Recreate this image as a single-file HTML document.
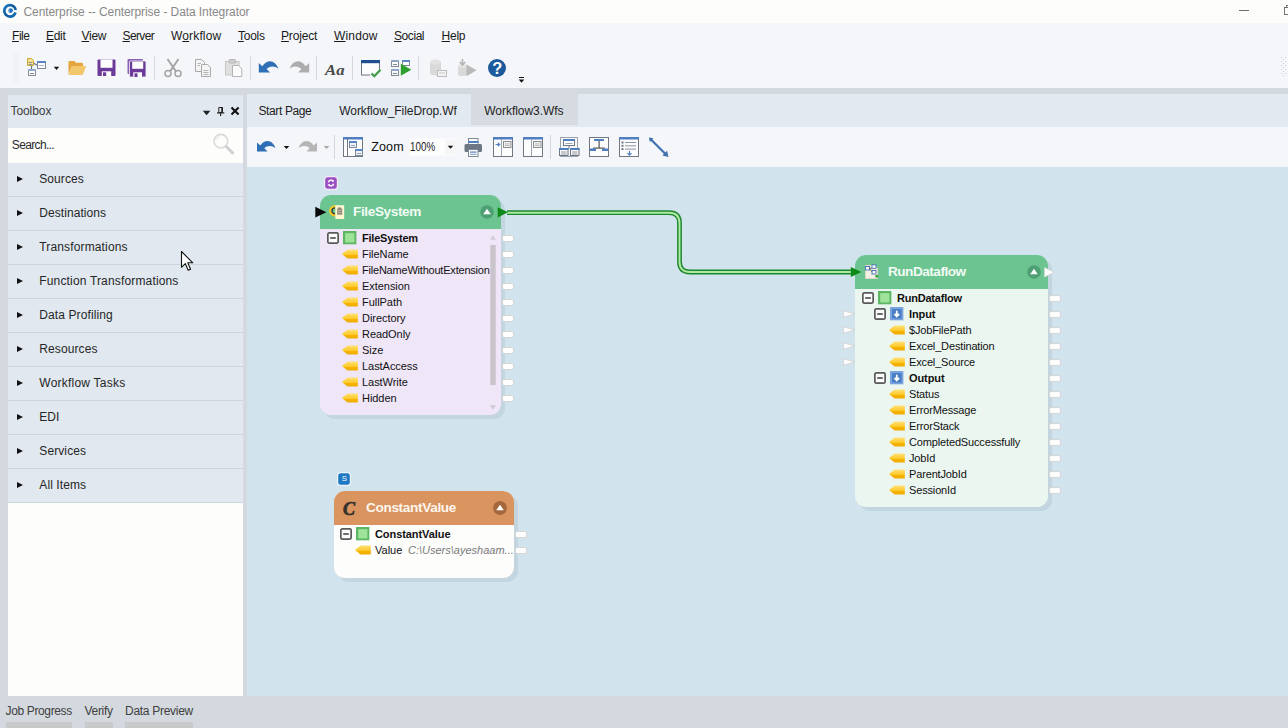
<!DOCTYPE html>
<html lang="en">
<head>
<meta charset="utf-8">
<title>Centerprise -- Centerprise - Data Integrator</title>
<style>
*{box-sizing:border-box;margin:0;padding:0}
html,body{width:1288px;height:728px;overflow:hidden;background:#d4d9df}
body{position:relative;font-family:"Liberation Sans",sans-serif;color:#1e1e1e}
.abs{position:absolute}
.t{position:absolute;white-space:nowrap;line-height:1}
#titlebar{left:0;top:0;width:1288px;height:22.500px;background:#fdfdfc}
#chrome{left:0;top:22.500px;width:1288px;height:65.500px;background:#f4f6f9}
#band{left:0;top:88px;width:1288px;height:7px;background:#d4d9df}
.menu{font-size:12px;top:30px;color:#1a1a1a}
.menu u{text-decoration:underline;text-underline-offset:1px;text-decoration-thickness:1px}
#tbx{left:7.500px;top:94.500px;width:235.700px;height:601.500px;background:#fdfdfc}
#tbxhead{left:0;top:0;width:100%;height:33.500px;background:#e1e8f0}
.item{left:0.500px;width:235.200px;height:34px;background:#e1e8f0;border-bottom:1px solid #ccd4dc;margin-top:0.500px}
.item span{position:absolute;left:31.300px;top:9.500px;font-size:12px;letter-spacing:0.1px;color:#262626;white-space:nowrap;line-height:1}
.item i{position:absolute;left:8.600px;top:13px;width:0;height:0;border-left:6px solid #111;border-top:3.800px solid transparent;border-bottom:3.800px solid transparent}
#tabs{left:246.800px;top:94px;width:1042px;height:33.500px;background:#e2e9f1}
.tab{font-size:12px;top:10.800px;color:#1e1e1e}
#tb2{left:246.800px;top:126.600px;width:1042px;height:41px;background:#f4f6f9}
#canvas{left:246.800px;top:166.700px;width:1042px;height:529.300px;background:#d1e3ec}
#status{left:0;top:696px;width:1288px;height:32px;background:#d4d9df}
.st{font-size:12px;top:9px;color:#404040}
.stb{top:26px;height:6.500px;background:#c8c9cb}
.node{position:absolute;border-radius:11px;box-shadow:4px 4px 0 #c3d5df}
.hd{position:absolute;left:0;top:0;right:0;height:34.500px;border-radius:11px 11px 0 0}
.ht{position:absolute;white-space:nowrap;line-height:1;font-size:13.600px;font-weight:bold;color:#f2fbf4}
.r{position:absolute;white-space:nowrap;line-height:1;font-size:11px;color:#111}
.r.b{font-weight:bold}
.port{position:absolute;width:12.500px;height:7px;border-radius:2px;background:#fdfdfd;border:1px solid #d6d6d6}

</style>
</head>
<body>
<div id="titlebar" class="abs"></div>
<div class="t" id="title" style="left:23.500px;top:6px;font-size:12px;color:#898989;letter-spacing:-0.08px">Centerprise -- Centerprise - Data Integrator</div>
<div class="abs" style="left:1239px;top:10px;width:10px;height:1px;background:#6e6e6e"></div>
<div class="abs" style="left:1284px;top:7px;width:10px;height:8px;border:1px solid #747474"></div>
<div class="abs" style="left:1286px;top:5px;width:8px;height:3px;border:1px solid #747474;border-bottom:0"></div>

<div id="chrome" class="abs"></div>
<div class="t menu" style="left:12px;letter-spacing:-0.44px"><u>F</u>ile</div>
<div class="t menu" style="left:46px;letter-spacing:-0.3px"><u>E</u>dit</div>
<div class="t menu" style="left:81.500px;letter-spacing:-0.27px"><u>V</u>iew</div>
<div class="t menu" style="left:122.500px;letter-spacing:-0.61px"><u>S</u>erver</div>
<div class="t menu" style="left:171px;letter-spacing:0.15px">W<u>o</u>rkflow</div>
<div class="t menu" style="left:238px;letter-spacing:-0.26px"><u>T</u>ools</div>
<div class="t menu" style="left:281px;letter-spacing:-0.15px"><u>P</u>roject</div>
<div class="t menu" style="left:334px;letter-spacing:0.17px"><u>W</u>indow</div>
<div class="t menu" style="left:394px;letter-spacing:-0.43px"><u>S</u>ocial</div>
<div class="t menu" style="left:441.500px;letter-spacing:-0.22px"><u>H</u>elp</div>
<svg class="abs" style="left:0;top:0" width="30" height="23" viewBox="0 0 30 23">
  <defs><linearGradient id="lg" x1="0" y1="0" x2="1" y2="1"><stop offset="0" stop-color="#1a7cc4"/><stop offset="0.5" stop-color="#0b579d"/><stop offset="1" stop-color="#1673b8"/></linearGradient></defs>
  <circle cx="10" cy="10.800" r="5.750" fill="none" stroke="url(#lg)" stroke-width="2.700" stroke-dasharray="32.500 3.630" stroke-dashoffset="-1.800"/>
  <circle cx="10.600" cy="10.600" r="2.300" fill="#1e73c2"/>
  <rect x="8.300" y="9.700" width="1.200" height="1.900" fill="#9cc3e6"/>
</svg>
<svg class="abs" style="left:0;top:50px" width="540" height="38" viewBox="0 50 540 38">
  <!-- grip -->
  <g fill="#d5d9df"><rect x="13.500" y="53" width="1" height="1"/><rect x="17.500" y="53" width="1" height="1"/><rect x="15.500" y="55" width="1" height="1"/><rect x="13.500" y="57" width="1" height="1"/><rect x="17.500" y="57" width="1" height="1"/><rect x="15.500" y="59" width="1" height="1"/><rect x="13.500" y="61" width="1" height="1"/><rect x="17.500" y="61" width="1" height="1"/><rect x="15.500" y="63" width="1" height="1"/><rect x="13.500" y="65" width="1" height="1"/><rect x="17.500" y="65" width="1" height="1"/><rect x="15.500" y="67" width="1" height="1"/><rect x="13.500" y="69" width="1" height="1"/><rect x="17.500" y="69" width="1" height="1"/><rect x="15.500" y="71" width="1" height="1"/><rect x="13.500" y="73" width="1" height="1"/><rect x="17.500" y="73" width="1" height="1"/><rect x="15.500" y="75" width="1" height="1"/><rect x="13.500" y="77" width="1" height="1"/><rect x="17.500" y="77" width="1" height="1"/><rect x="15.500" y="79" width="1" height="1"/><rect x="13.500" y="81" width="1" height="1"/><rect x="17.500" y="81" width="1" height="1"/></g>
  <!-- new dataflow -->
  <g>
    <path d="M32.5 62.5 L37.5 65.5 M31.5 66 V70" stroke="#6b7785" stroke-width="1.2" fill="none"/>
    <path d="M27.5 58.5 H31.5 L33.5 60.5 V65.5 H27.5 Z" fill="#f7e08a" stroke="#c9a93a" stroke-width="1"/>
    <rect x="28.5" y="62" width="4" height="1" fill="#8d95a0"/><rect x="28.5" y="64" width="4" height="1" fill="#8d95a0"/>
    <rect x="37.5" y="61.5" width="8" height="7" fill="#fdfdfd" stroke="#7f8a99" stroke-width="1"/>
    <rect x="37" y="61" width="9" height="2" fill="#5b86c4"/>
    <rect x="39" y="65" width="5" height="1" fill="#a9b2bd"/>
    <rect x="28.5" y="69.500" width="7" height="6" fill="#fdfdfd" stroke="#7f8a99" stroke-width="1"/>
    <rect x="28" y="69" width="8" height="2" fill="#8fa7c9"/>
    <rect x="30" y="73" width="4" height="1" fill="#7f8a99"/>
  </g>
  <path d="M53.800 66.800 H59.200 L56.500 69.900 Z" fill="#111"/>
  <!-- folder -->
  <g>
    <path d="M68.500 74.500 V62 Q68.500 61 69.500 61 H74.500 L76 62.800 H82 Q83 62.800 83 63.800 V66 H72 Z" fill="#e4a63c"/>
    <path d="M68.500 75 L72 66 H86.200 L82.800 75 Z" fill="#f2c76c"/>
  </g>
  <!-- save -->
  <g>
    <rect x="97.500" y="59.500" width="18" height="16.500" rx="1" fill="#6c3b9a"/>
    <rect x="100.500" y="59.500" width="12" height="8.300" fill="#fdfdfd"/>
    <rect x="101.800" y="71.300" width="9.400" height="4.700" fill="#fdfdfd"/>
    <rect x="103" y="72.300" width="3.200" height="3.700" fill="#6c3b9a"/>
  </g>
  <!-- save all -->
  <g>
    <rect x="127.500" y="59" width="15.500" height="15" rx="1" fill="#8b62b3"/>
    <rect x="129.500" y="61" width="16.500" height="16" rx="1" fill="#6c3b9a" stroke="#f4f6f9" stroke-width="0.800"/>
    <rect x="132.200" y="61.600" width="11" height="7.200" fill="#fdfdfd"/>
    <rect x="133.300" y="72.300" width="8.700" height="4.700" fill="#fdfdfd"/>
    <rect x="134.500" y="73.300" width="3" height="3.700" fill="#6c3b9a"/>
  </g>
  <rect x="154" y="56" width="1" height="24" fill="#d4d8de"/>
  <!-- scissors -->
  <g stroke="#a4a4a4" fill="none" stroke-width="1.500">
    <circle cx="168" cy="73.600" r="3"/><circle cx="178" cy="73.600" r="3"/>
    <path d="M170 71.500 L178.500 59 M176 71.500 L167.500 59" stroke-width="1.900"/>
  </g>
  <!-- copy -->
  <g stroke="#a9a9a9" fill="#f4f4f4" stroke-width="1">
    <path d="M195.500 59.500 H201.500 L204.500 62.500 V71.500 H195.500 Z"/>
    <path d="M201.500 64.500 H207.500 L210.500 67.500 V76.500 H201.500 Z"/>
    <path d="M203.500 70.500 H208.500 M203.500 72.500 H208.500 M203.500 74.500 H208.500 M197.500 63.500 H201 M197.500 65.500 H200" stroke="#b5b5b5"/>
  </g>
  <!-- paste -->
  <g>
    <rect x="225.500" y="61.500" width="13.500" height="13.500" fill="#e0e0e0" stroke="#c6c6c6" stroke-width="1"/>
    <rect x="229" y="59.500" width="6.500" height="3.500" rx="1" fill="#d0d0d0" stroke="#b4b4b4" stroke-width="1"/>
    <path d="M232.500 65.500 H238.500 L241.800 68.800 V76.500 H232.500 Z" fill="#fbfbfb" stroke="#b4b4b4" stroke-width="1"/>
  </g>
  <rect x="250" y="56" width="1" height="24" fill="#d4d8de"/>
  <!-- undo -->
  <path d="M258.800 63 L258.800 72.400 L270 72.400 L266.600 69 C269.500 66 274.500 65.600 278.400 68.800 C276 61.300 268 57.800 262.300 66.200 Z" fill="#2f6fb6"/>
  <!-- redo -->
  <path d="M309.200 63 L309.200 72.400 L298 72.400 L301.400 69 C298.500 66 293.500 65.600 289.600 68.800 C292 61.300 300 57.800 305.700 66.200 Z" fill="#adadad"/>
  <rect x="316" y="56" width="1" height="24" fill="#d4d8de"/>
  <text x="325" y="74.800" font-family="Liberation Serif,serif" font-style="italic" font-weight="bold" font-size="15" fill="#4a4a4a" textLength="19.500" lengthAdjust="spacingAndGlyphs">Aa</text>
  <rect x="352" y="56" width="1" height="24" fill="#d4d8de"/>
  <!-- window check -->
  <g>
    <rect x="361.500" y="61.500" width="18" height="13.500" fill="#fdfdfd" stroke="#6f7782" stroke-width="1"/>
    <rect x="361" y="60" width="19" height="3.200" fill="#1f4f91"/>
    <rect x="370" y="72" width="12" height="6" fill="#f4f6f9"/>
    <path d="M371.500 73.500 L374.300 76.300 L380.500 69.800" stroke="#3f9b45" stroke-width="2.200" fill="none"/>
  </g>
  <!-- run -->
  <g>
    <rect x="391.500" y="60.500" width="7" height="6" fill="#fdfdfd" stroke="#7f8a99"/>
    <rect x="391" y="60" width="8" height="2" fill="#8fa7c9"/>
    <rect x="393" y="64" width="4" height="1" fill="#7f8a99"/>
    <rect x="391.500" y="69.500" width="7" height="6" fill="#fdfdfd" stroke="#7f8a99"/>
    <rect x="391" y="69" width="8" height="2" fill="#8fa7c9"/>
    <rect x="393" y="73" width="4" height="1" fill="#7f8a99"/>
    <rect x="402.500" y="60.500" width="7" height="5" fill="#fdfdfd" stroke="#7f8a99"/>
    <rect x="402" y="60" width="8" height="2" fill="#5b86c4"/>
    <path d="M400.800 63.800 L411.300 69.800 L400.800 75.800 Z" fill="#2ea02e"/>
  </g>
  <rect x="418" y="56" width="1" height="24" fill="#d4d8de"/>
  <!-- db gray -->
  <g>
    <path d="M430 62 V73 A5.500 2.500 0 0 0 441 73 V62 Z" fill="#d9d9d9"/>
    <ellipse cx="435.500" cy="62" rx="5.500" ry="2.500" fill="#e3e3e3"/>
    <rect x="437.500" y="70.500" width="9" height="6" fill="#f2f2f2" stroke="#bdbdbd"/>
    <rect x="439" y="72.500" width="6" height="1" fill="#c9c9c9"/>
  </g>
  <!-- gray play -->
  <g>
    <path d="M458 66 V74 A4.500 2 0 0 0 467 74 V66 Z" fill="#d9d9d9"/>
    <ellipse cx="462.500" cy="66" rx="4.500" ry="2" fill="#e3e3e3"/>
    <path d="M462.500 59 V64.500 M459.800 62 L462.500 65 L465.200 62" stroke="#b4b4b4" stroke-width="1.600" fill="none"/>
    <path d="M466.500 64.500 L476.500 70.300 L466.500 76.200 Z" fill="#b9b9b9"/>
  </g>
  <!-- help -->
  <circle cx="497" cy="68" r="9" fill="#1d5a9c"/>
  <text x="497.200" y="74" text-anchor="middle" font-family="Liberation Sans,sans-serif" font-weight="bold" font-size="16.500" fill="#fdfdfd">?</text>
  <!-- overflow -->
  <rect x="519" y="77" width="5" height="1" fill="#111"/>
  <path d="M518.700 79.500 H524.300 L521.500 82.800 Z" fill="#111"/>
</svg>
<svg class="abs" style="left:1278px;top:55px" width="10" height="26" viewBox="1278 55 10 26">
 <g fill="#cdd1d7"><rect x="1281" y="57" width="1" height="1"/><rect x="1283" y="59" width="1" height="1"/><rect x="1281" y="61" width="1" height="1"/><rect x="1283" y="63" width="1" height="1"/><rect x="1281" y="65" width="1" height="1"/><rect x="1283" y="67" width="1" height="1"/><rect x="1281" y="69" width="1" height="1"/><rect x="1283" y="71" width="1" height="1"/><rect x="1281" y="73" width="1" height="1"/><rect x="1283" y="75" width="1" height="1"/><rect x="1285" y="57" width="1" height="1"/><rect x="1285" y="61" width="1" height="1"/><rect x="1285" y="65" width="1" height="1"/><rect x="1285" y="69" width="1" height="1"/><rect x="1285" y="73" width="1" height="1"/></g>
</svg>

<div id="band" class="abs"></div>

<div id="tbx" class="abs">
  <div id="tbxhead" class="abs"></div>
  <div class="t" style="left:3px;top:10.500px;font-size:12px;color:#3c3c3c;letter-spacing:-0.08px">Toolbox</div>
  <svg class="abs" style="left:189.500px;top:8.500px" width="46" height="18" viewBox="197 103 46 18">
    <path d="M202.800 110.800 H210.400 L206.600 115.200 Z" fill="#222"/>
    <path d="M218.800 107.500 H222.300 V112.500 H218.800 Z" stroke="#222" stroke-width="1" fill="none"/>
    <rect x="221.300" y="107" width="1.500" height="6" fill="#222"/>
    <rect x="217" y="112.300" width="7.300" height="1.200" fill="#222"/>
    <rect x="220" y="113.300" width="1.200" height="2.700" fill="#222"/>
    <path d="M231.500 107.500 L238.600 114.600 M238.600 107.500 L231.500 114.600" stroke="#111" stroke-width="2.100"/>
  </svg>

  <div class="t" style="left:4.300px;top:44.300px;font-size:12px;color:#2a2a2a;letter-spacing:-0.65px">Search...</div>
  <svg class="abs" style="left:203.500px;top:36.500px" width="26" height="26" viewBox="211 131 26 26">
    <circle cx="220.900" cy="141.200" r="6.800" fill="#fdfdfc" stroke="#dadada" stroke-width="1.700"/>
    <path d="M226.300 146.600 L232.600 152.900" stroke="#d2d2d2" stroke-width="3" stroke-linecap="round"/>
    <path d="M216.600 140 A4.600 4.600 0 0 1 219.600 136.800" stroke="#e4e4e4" stroke-width="1" fill="none"/>
  </svg>

  <div class="abs item" style="top:68px"><i></i><span style="letter-spacing:0.07px">Sources</span></div>
  <div class="abs item" style="top:102px"><i></i><span style="letter-spacing:0.06px">Destinations</span></div>
  <div class="abs item" style="top:136px"><i></i><span style="letter-spacing:0.14px">Transformations</span></div>
  <div class="abs item" style="top:170px"><i></i><span style="letter-spacing:0.16px">Function Transformations</span></div>
  <div class="abs item" style="top:204px"><i></i><span style="letter-spacing:0.1px">Data Profiling</span></div>
  <div class="abs item" style="top:238px"><i></i><span style="letter-spacing:0.1px">Resources</span></div>
  <div class="abs item" style="top:272px"><i></i><span style="letter-spacing:0.23px">Workflow Tasks</span></div>
  <div class="abs item" style="top:306px"><i></i><span style="letter-spacing:-0.04px">EDI</span></div>
  <div class="abs item" style="top:340px"><i></i><span style="letter-spacing:0.1px">Services</span></div>
  <div class="abs item" style="top:374px"><i></i><span style="letter-spacing:0.09px">All Items</span></div>
</div>

<div id="tabs" class="abs">
  <div class="abs" style="left:224.400px;top:-6px;width:106.800px;height:36.700px;background:#d6dbe1"></div>
  <div class="t tab" style="left:11.700px;letter-spacing:-0.38px">Start Page</div>
  <div class="t tab" style="left:92.500px;letter-spacing:-0.08px">Workflow_FileDrop.Wf</div>
  <div class="t tab" style="left:237.500px;letter-spacing:-0.04px">Workflow3.Wfs</div>
</div>
<div id="tb2" class="abs">
<svg class="abs" style="left:0.200px;top:-1.600px" width="460" height="42" viewBox="247 125 460 42">
  <!-- undo -->
  <path transform="translate(257,151.400) scale(0.940) translate(-258.800,-72.400)" d="M258.800 63 L258.800 72.400 L270 72.400 L266.600 69 C269.500 66 274.500 65.600 278.400 68.800 C276 61.300 268 57.800 262.300 66.200 Z" fill="#2f6fb6"/>
  <path d="M283.700 146 H289.300 L286.500 149 Z" fill="#111"/>
  <!-- redo -->
  <path transform="translate(317,151.400) scale(0.940) translate(-309.200,-72.400)" d="M309.200 63 L309.200 72.400 L298 72.400 L301.400 69 C298.500 66 293.500 65.600 289.600 68.800 C292 61.300 300 57.800 305.700 66.200 Z" fill="#b5b5b5"/>
  <path d="M323.700 146 H329.300 L326.500 149 Z" fill="#a8a8a8"/>
  <rect x="334" y="135" width="1" height="24" fill="#d4d8de"/>
  <!-- layout icon -->
  <g>
    <rect x="343.500" y="138.500" width="19" height="18" fill="#fdfdfd" stroke="#6f7782"/>
    <rect x="343" y="137" width="20" height="2.500" fill="#4f7fc0"/>
    <rect x="347" y="139" width="1" height="17" fill="#6f7782"/>
    <rect x="349.500" y="141.500" width="7" height="6" fill="#eef2f7" stroke="#7f8a99"/>
    <rect x="349" y="141" width="8" height="2" fill="#5b86c4"/>
    <rect x="351" y="145" width="4" height="1" fill="#9aa3ae"/>
    <rect x="355.500" y="149.500" width="7" height="6" fill="#eef2f7" stroke="#7f8a99"/>
    <rect x="355" y="149" width="8" height="2" fill="#5b86c4"/>
    <rect x="357" y="153" width="4" height="1" fill="#9aa3ae"/>
  </g>
  <rect x="409" y="138.500" width="47.500" height="17" fill="#fdfdfd"/><rect x="445" y="139.500" width="11.500" height="15" fill="#f6f6f6"/>
  <path d="M447.700 145.800 H453.300 L450.500 148.800 Z" fill="#111"/>
  <!-- printer -->
  <g>
    <rect x="468.500" y="138.500" width="9.500" height="6" fill="#fdfdfd" stroke="#7f8a99"/>
    <rect x="468" y="141" width="10.500" height="2" fill="#4f7fc0"/>
    <rect x="464.500" y="144" width="17.500" height="8" rx="1.500" fill="#6d7683"/>
    <rect x="468.500" y="149.500" width="9.500" height="7" fill="#fdfdfd" stroke="#7f8a99"/>
    <rect x="470" y="151.500" width="6.500" height="1.200" fill="#4f7fc0"/><rect x="470" y="153.800" width="6.500" height="1.200" fill="#8fa7c9"/>
  </g>
  <!-- panel icon 1 -->
  <g>
    <rect x="493.500" y="138.500" width="19" height="18" fill="#fdfdfd" stroke="#6f7782"/>
    <rect x="493" y="137" width="20" height="2.500" fill="#4f7fc0"/>
    <rect x="501" y="139" width="1" height="17" fill="#9aa3ae"/>
    <rect x="503.500" y="141.500" width="7.500" height="6" fill="#f0f0f0" stroke="#8d8d8d"/>
    <rect x="505" y="143.500" width="4.500" height="0.800" fill="#b0b0b0"/><rect x="505" y="145.200" width="4.500" height="0.800" fill="#b0b0b0"/>
    <path d="M495.500 144.500 H499.500 M497.800 142.800 L499.600 144.500 L497.800 146.200" stroke="#4f7fc0" stroke-width="1.200" fill="none"/>
  </g>
  <!-- panel icon 2 -->
  <g>
    <rect x="523.500" y="138.500" width="19" height="18" fill="#fdfdfd" stroke="#6f7782"/>
    <rect x="523" y="137" width="20" height="2.500" fill="#4f7fc0"/>
    <rect x="531" y="139" width="1" height="17" fill="#9aa3ae"/>
    <rect x="533.500" y="141.500" width="7.500" height="6" fill="#f0f0f0" stroke="#8d8d8d"/>
    <rect x="535" y="143.500" width="4.500" height="0.800" fill="#b0b0b0"/><rect x="535" y="145.200" width="4.500" height="0.800" fill="#b0b0b0"/>
  </g>
  <rect x="550" y="135" width="1" height="24" fill="#d4d8de"/>
  <!-- icon 3: hierarchy -->
  <g>
    <rect x="560.500" y="137.500" width="17" height="19" fill="#f7f8fa" stroke="#9aa3ae"/>
    <rect x="563.500" y="139.500" width="11" height="6" fill="#fdfdfd" stroke="#6f7782"/>
    <rect x="563" y="139" width="12" height="2" fill="#4f7fc0"/>
    <rect x="565.500" y="143" width="7" height="1" fill="#9aa3ae"/>
    <rect x="568.500" y="146" width="1" height="2.500" fill="#6f7782"/>
    <rect x="559.500" y="148.500" width="8.500" height="7" fill="#fdfdfd" stroke="#6f7782"/>
    <rect x="559" y="148" width="9.500" height="2" fill="#4f7fc0"/>
    <rect x="561" y="151.500" width="5.500" height="1" fill="#8d95a0"/><rect x="561" y="153.500" width="5.500" height="1" fill="#8d95a0"/>
    <rect x="570.500" y="148.500" width="8.500" height="7" fill="#fdfdfd" stroke="#6f7782"/>
    <rect x="570" y="148" width="9.500" height="2" fill="#4f7fc0"/>
    <rect x="572" y="151.500" width="5.500" height="1" fill="#8d95a0"/><rect x="572" y="153.500" width="5.500" height="1" fill="#8d95a0"/>
  </g>
  <!-- icon 4 -->
  <g>
    <rect x="589.500" y="137.500" width="19" height="19" fill="#fdfdfd" stroke="#6f7782"/>
    <rect x="594" y="139" width="10" height="2" fill="#4f7fc0"/>
    <rect x="598.500" y="141" width="1.200" height="7" fill="#555"/>
    <rect x="593" y="147.500" width="12" height="1.200" fill="#555"/>
    <rect x="590" y="148.500" width="6" height="2.500" fill="#4f7fc0"/><rect x="602" y="148.500" width="6" height="2.500" fill="#4f7fc0"/>
  </g>
  <!-- icon 5 -->
  <g>
    <rect x="619.500" y="138.500" width="19" height="18" fill="#fdfdfd" stroke="#6f7782"/>
    <rect x="619" y="137" width="20" height="2.500" fill="#4f7fc0"/>
    <g fill="#8d95a0"><rect x="625" y="142" width="11" height="1"/><rect x="625" y="145.300" width="11" height="1"/><rect x="625" y="148.600" width="11" height="1"/></g>
    <g fill="#6f7782"><rect x="621.500" y="141.500" width="2" height="2"/><rect x="621.500" y="144.800" width="2" height="2"/><rect x="621.500" y="148.100" width="2" height="2"/></g>
    <path d="M629.500 151 V155 M627.500 153.200 L629.500 155.200 L631.500 153.200" stroke="#4f7fc0" stroke-width="1.200" fill="none"/>
  </g>
  <!-- arrow line -->
  <g>
    <path d="M650 138.500 L665 153.500" stroke="#3f72ad" stroke-width="2.200"/>
    <path d="M649 137.500 L653.500 138.300 L649.800 142 Z" fill="#3f72ad"/>
    
    <path d="M668.500 157 L662.300 155.600 L667.100 150.800 Z" fill="#3f72ad"/>
  </g>
</svg>
<div class="t" style="left:124.500px;top:14.600px;font-size:12.500px;color:#111;letter-spacing:0.1px">Zoom</div>
<div class="t" style="left:163.500px;top:14.400px;font-size:12.300px;color:#222;transform:scaleX(0.8);transform-origin:0 0">100%</div>

</div>
<div id="canvas" class="abs"></div>

<div id="status" class="abs">
  <div class="t st" style="left:5.500px;letter-spacing:-0.36px">Job Progress</div>
  <div class="t st" style="left:84.500px;letter-spacing:-0.3px">Verify</div>
  <div class="t st" style="left:125px;letter-spacing:-0.28px">Data Preview</div>
  <div class="abs stb" style="left:5.500px;width:66.500px"></div>
  <div class="abs stb" style="left:84.500px;width:28.500px"></div>
  <div class="abs stb" style="left:125px;width:68px"></div>
</div>
<svg width="0" height="0" style="position:absolute"><defs>
<linearGradient id="tg" x1="0" y1="0" x2="0" y2="1"><stop offset="0" stop-color="#ffe27a"/><stop offset="0.55" stop-color="#fdc92b"/><stop offset="0.62" stop-color="#f4b400"/><stop offset="1" stop-color="#f1ab00"/></linearGradient>
<symbol id="tag" viewBox="0 0 16 10"><path d="M0 5 L5.500 0.400 H15.800 V9.600 H5.500 Z" fill="url(#tg)"/></symbol>
<symbol id="mn" viewBox="0 0 12 12"><rect x="0.850" y="0.850" width="10.300" height="10.300" rx="1.300" fill="#fbfbfb" stroke="#5a5a5a" stroke-width="1.700"/><rect x="3.200" y="5.200" width="5.600" height="1.600" fill="#4a4a4a"/></symbol>
<symbol id="gs" viewBox="0 0 13.600 13.600"><rect x="1.100" y="1.100" width="11.400" height="11.400" fill="#9fe39a" stroke="#5db661" stroke-width="2.200"/></symbol>
<symbol id="bi" viewBox="0 0 13 13" preserveAspectRatio="none"><rect x="0" y="0" width="13" height="13" fill="#78a3de"/><rect x="2" y="2" width="9" height="9" fill="#4a7cc4"/><path d="M6.500 3.500 V8.300 M4.300 6.600 L6.500 9 L8.700 6.600" stroke="#fdfdfd" stroke-width="1.700" fill="none"/></symbol>
<symbol id="lp" viewBox="0 0 13 8"><path d="M0.600 0.800 L12 4 L0.600 7.200 Z" fill="#fdfdfd" stroke="#d2d2d2" stroke-width="0.900"/></symbol>
</defs></svg>
<div class="node" style="left:320px;top:194.500px;width:181px;height:220.500px;background:#efe6f7"><div class="hd" style="background:#6cc591"></div></div>
<svg class="abs" style="left:324px;top:176px" width="14" height="14" viewBox="0 0 14 14"><rect x="0.600" y="0.600" width="12.800" height="12.800" rx="3" fill="#9a4fc2" stroke="#f3ecf8" stroke-width="1.200"/>
<path d="M4.300 6.300 A2.900 2.900 0 0 1 9.300 5.200 M9.700 7.700 A2.900 2.900 0 0 1 4.700 8.800" stroke="#fdfdfd" stroke-width="1.300" fill="none"/><path d="M8.400 3.600 L10.400 5.600 L7.900 6.100 Z M5.600 10.400 L3.600 8.400 L6.100 7.900 Z" fill="#fdfdfd"/></svg>
<svg class="abs" style="left:312px;top:203px" width="202" height="20" viewBox="312 203 202 20">
<path d="M315.300 206.800 L326.300 212.200 L315.300 217.600 Z" fill="#0a0a0a"/>
<g><circle cx="334.600" cy="210.800" r="4.400" fill="none" stroke="#f8c822" stroke-width="2.200"/>
<path d="M335 207.900 A3 3 0 0 0 335 213.900" fill="none" stroke="#3b3a2c" stroke-width="1.300"/>
<rect x="335.300" y="205.200" width="8.900" height="13.800" fill="#fbf6cf"/>
<rect x="337.200" y="208.500" width="5" height="6.200" fill="#938a78"/><rect x="338" y="207.600" width="3" height="1" fill="#6b6558"/><rect x="338" y="210" width="3.400" height="0.800" fill="#c9c2b0"/><rect x="338" y="212" width="3.400" height="0.800" fill="#c9c2b0"/></g>
<circle cx="487" cy="212" r="6.800" fill="#4f9f74"/><path d="M483.200 214.300 L487 208.700 L490.800 214.300 Z" fill="#fdfdfd"/>
</svg>
<div class="ht" style="left:353px;top:205.400px;letter-spacing:-0.38px">FileSystem</div>
<svg class="abs" style="left:327px;top:232px" width="12" height="12"><use href="#mn"/></svg>
<svg class="abs" style="left:343.2px;top:231.2px" width="13.6" height="13.6"><use href="#gs"/></svg>
<div class="r b" style="left:362px;top:233px;letter-spacing:-0.22px">FileSystem</div>
<svg class="abs" style="left:341.6px;top:248.8px" width="16" height="10"><use href="#tag"/></svg>
<div class="r" style="left:362px;top:249px;letter-spacing:-0.05px">FileName</div>
<svg class="abs" style="left:341.6px;top:264.8px" width="16" height="10"><use href="#tag"/></svg>
<div class="r" style="left:362px;top:265px;letter-spacing:-0.21px">FileNameWithoutExtension</div>
<svg class="abs" style="left:341.6px;top:280.8px" width="16" height="10"><use href="#tag"/></svg>
<div class="r" style="left:362px;top:281px;letter-spacing:-0.05px">Extension</div>
<svg class="abs" style="left:341.6px;top:296.8px" width="16" height="10"><use href="#tag"/></svg>
<div class="r" style="left:362px;top:297px;letter-spacing:-0.05px">FullPath</div>
<svg class="abs" style="left:341.6px;top:312.8px" width="16" height="10"><use href="#tag"/></svg>
<div class="r" style="left:362px;top:313px;letter-spacing:-0.05px">Directory</div>
<svg class="abs" style="left:341.6px;top:328.8px" width="16" height="10"><use href="#tag"/></svg>
<div class="r" style="left:362px;top:329px;letter-spacing:-0.05px">ReadOnly</div>
<svg class="abs" style="left:341.6px;top:344.8px" width="16" height="10"><use href="#tag"/></svg>
<div class="r" style="left:362px;top:345px;letter-spacing:-0.05px">Size</div>
<svg class="abs" style="left:341.6px;top:360.8px" width="16" height="10"><use href="#tag"/></svg>
<div class="r" style="left:362px;top:361px;letter-spacing:-0.05px">LastAccess</div>
<svg class="abs" style="left:341.6px;top:376.8px" width="16" height="10"><use href="#tag"/></svg>
<div class="r" style="left:362px;top:377px;letter-spacing:-0.05px">LastWrite</div>
<svg class="abs" style="left:341.6px;top:392.8px" width="16" height="10"><use href="#tag"/></svg>
<div class="r" style="left:362px;top:393px;letter-spacing:-0.05px">Hidden</div>
<div class="port" style="left:501.5px;top:234.5px"></div>
<div class="port" style="left:501.5px;top:250.5px"></div>
<div class="port" style="left:501.5px;top:266.5px"></div>
<div class="port" style="left:501.5px;top:282.5px"></div>
<div class="port" style="left:501.5px;top:298.5px"></div>
<div class="port" style="left:501.5px;top:314.5px"></div>
<div class="port" style="left:501.5px;top:330.5px"></div>
<div class="port" style="left:501.5px;top:346.5px"></div>
<div class="port" style="left:501.5px;top:362.5px"></div>
<div class="port" style="left:501.5px;top:378.5px"></div>
<div class="port" style="left:501.5px;top:394.5px"></div>
<svg class="abs" style="left:488px;top:233px" width="10" height="180" viewBox="488 233 10 180">
<path d="M490 239.700 L492.900 235.200 L495.800 239.700 Z" fill="#d3cbd6"/>
<rect x="490.300" y="245" width="5.400" height="140" fill="#c9c4cb"/>
<path d="M490 405.300 L492.900 409.800 L495.800 405.300 Z" fill="#cfc8d3"/>
</svg>
<div class="node" style="left:333.500px;top:490.500px;width:180.400px;height:87px;background:#fdfdfc"><div class="hd" style="background:#d9945f"></div></div>
<svg class="abs" style="left:337px;top:472px" width="14" height="14" viewBox="0 0 14 14"><rect x="0.600" y="0.600" width="12.800" height="12.800" rx="3" fill="#1f78c4" stroke="#eef5fb" stroke-width="1.200"/></svg>
<div class="t" style="left:341.700px;top:475.200px;font-size:7.800px;color:#fdfdfd">S</div>
<div class="t" style="left:343px;top:499.500px;font-family:'Liberation Serif',serif;font-style:italic;font-weight:bold;font-size:18px;color:#35302c;-webkit-text-stroke:0.700px #35302c">C</div>
<svg class="abs" style="left:492px;top:500px" width="16" height="16" viewBox="492 500 16 16"><circle cx="500" cy="508" r="6.900" fill="#a5683c"/><path d="M496.200 510.300 L500 504.700 L503.800 510.300 Z" fill="#fdfdfd"/></svg>
<div class="ht" style="left:366px;top:501.300px;color:#fdf6ee;letter-spacing:-0.34px">ConstantValue</div>
<svg class="abs" style="left:340px;top:528px" width="12" height="12"><use href="#mn"/></svg>
<svg class="abs" style="left:356.2px;top:527.2px" width="13.6" height="13.6"><use href="#gs"/></svg>
<div class="r b" style="left:375px;top:529px;letter-spacing:-0.07px">ConstantValue</div>
<svg class="abs" style="left:354.9px;top:544.8px" width="16" height="10"><use href="#tag"/></svg>
<div class="r" style="left:375px;top:545px">Value</div>
<div class="r" style="left:408px;top:545px;font-style:italic;color:#7a7a7a">C:\Users\ayeshaam...</div>
<div class="port" style="left:514.5px;top:530.5px"></div>
<div class="port" style="left:514.5px;top:546.5px"></div>
<div class="node" style="left:854.500px;top:254.500px;width:193.500px;height:252.500px;background:#ebf6f0"><div class="hd" style="background:#6cc591"></div></div>
<svg class="abs" style="left:862px;top:262px" width="196" height="20" viewBox="862 262 196 20">
<g><path d="M865.500 265.500 H874.500 L877.500 268 V278.500 H865.500 Z" fill="#f3f0e4" stroke="#dcd7c2" stroke-width="1"/>
<rect x="865.500" y="266.500" width="4" height="3.500" fill="#fdfdfd" stroke="#3f6fb0" stroke-width="0.900"/><rect x="872" y="264.800" width="4" height="3.500" fill="#fdfdfd" stroke="#3f6fb0" stroke-width="0.900"/><rect x="872" y="270.500" width="4" height="3.500" fill="#fdfdfd" stroke="#3f6fb0" stroke-width="0.900"/>
<path d="M869.500 268.200 H872 M869.500 268.200 L872 272" stroke="#555" stroke-width="0.800"/><rect x="875.500" y="275" width="2.500" height="2.500" fill="#2ea02e"/></g>
<circle cx="1034" cy="272" r="6.800" fill="#4f9f74"/><path d="M1030.200 274.300 L1034 268.700 L1037.800 274.300 Z" fill="#fdfdfd"/>
<path d="M1044.500 267.500 L1054 272.300 L1044.500 277 Z" fill="#fdfdfd" stroke="#d8d8d8" stroke-width="0.800"/>
</svg>
<div class="ht" style="left:888px;top:265.400px;letter-spacing:-0.5px">RunDataflow</div>
<svg class="abs" style="left:862px;top:292px" width="12" height="12"><use href="#mn"/></svg>
<svg class="abs" style="left:878.2px;top:291.2px" width="13.6" height="13.6"><use href="#gs"/></svg>
<div class="r b" style="left:897px;top:293px;letter-spacing:-0.22px">RunDataflow</div>
<svg class="abs" style="left:874px;top:308px" width="12" height="12"><use href="#mn"/></svg>
<svg class="abs" style="left:890.2px;top:307.2px" width="13.6" height="13.6"><use href="#bi"/></svg>
<div class="r b" style="left:909px;top:309px;letter-spacing:-0.1px">Input</div>
<svg class="abs" style="left:888.9px;top:324.8px" width="16" height="10"><use href="#tag"/></svg>
<div class="r" style="left:909px;top:325px;letter-spacing:-0.15px">$JobFilePath</div>
<svg class="abs" style="left:888.9px;top:340.8px" width="16" height="10"><use href="#tag"/></svg>
<div class="r" style="left:909px;top:341px;letter-spacing:-0.15px">Excel_Destination</div>
<svg class="abs" style="left:888.9px;top:356.8px" width="16" height="10"><use href="#tag"/></svg>
<div class="r" style="left:909px;top:357px;letter-spacing:-0.15px">Excel_Source</div>
<svg class="abs" style="left:874px;top:372px" width="12" height="12"><use href="#mn"/></svg>
<svg class="abs" style="left:890.2px;top:371.2px" width="13.6" height="13.6"><use href="#bi"/></svg>
<div class="r b" style="left:909px;top:373px;letter-spacing:-0.1px">Output</div>
<svg class="abs" style="left:888.9px;top:388.8px" width="16" height="10"><use href="#tag"/></svg>
<div class="r" style="left:909px;top:389px;letter-spacing:-0.15px">Status</div>
<svg class="abs" style="left:888.9px;top:404.8px" width="16" height="10"><use href="#tag"/></svg>
<div class="r" style="left:909px;top:405px;letter-spacing:-0.15px">ErrorMessage</div>
<svg class="abs" style="left:888.9px;top:420.8px" width="16" height="10"><use href="#tag"/></svg>
<div class="r" style="left:909px;top:421px;letter-spacing:-0.15px">ErrorStack</div>
<svg class="abs" style="left:888.9px;top:436.8px" width="16" height="10"><use href="#tag"/></svg>
<div class="r" style="left:909px;top:437px;letter-spacing:-0.15px">CompletedSuccessfully</div>
<svg class="abs" style="left:888.9px;top:452.8px" width="16" height="10"><use href="#tag"/></svg>
<div class="r" style="left:909px;top:453px;letter-spacing:-0.15px">JobId</div>
<svg class="abs" style="left:888.9px;top:468.8px" width="16" height="10"><use href="#tag"/></svg>
<div class="r" style="left:909px;top:469px;letter-spacing:-0.15px">ParentJobId</div>
<svg class="abs" style="left:888.9px;top:484.8px" width="16" height="10"><use href="#tag"/></svg>
<div class="r" style="left:909px;top:485px;letter-spacing:-0.15px">SessionId</div>
<div class="port" style="left:1048.5px;top:294.5px"></div>
<div class="port" style="left:1048.5px;top:310.5px"></div>
<div class="port" style="left:1048.5px;top:326.5px"></div>
<div class="port" style="left:1048.5px;top:342.5px"></div>
<div class="port" style="left:1048.5px;top:358.5px"></div>
<div class="port" style="left:1048.5px;top:374.5px"></div>
<div class="port" style="left:1048.5px;top:390.5px"></div>
<div class="port" style="left:1048.5px;top:406.5px"></div>
<div class="port" style="left:1048.5px;top:422.5px"></div>
<div class="port" style="left:1048.5px;top:438.5px"></div>
<div class="port" style="left:1048.5px;top:454.5px"></div>
<div class="port" style="left:1048.5px;top:470.5px"></div>
<div class="port" style="left:1048.5px;top:486.5px"></div>
<svg class="abs" style="left:842.5px;top:310px" width="13" height="8"><use href="#lp"/></svg>
<svg class="abs" style="left:842.5px;top:326px" width="13" height="8"><use href="#lp"/></svg>
<svg class="abs" style="left:842.5px;top:342px" width="13" height="8"><use href="#lp"/></svg>
<svg class="abs" style="left:842.5px;top:358px" width="13" height="8"><use href="#lp"/></svg>
<svg class="abs" style="left:490px;top:190px" width="390" height="110" viewBox="490 190 390 110">
<path d="M507 212.700 H669 Q679.500 212.700 679.500 223.200 V261.500 Q679.500 272 690 272 H852" fill="none" stroke="#1f872c" stroke-width="4.800"/>
<path d="M507 212.700 H669 Q679.500 212.700 679.500 223.200 V261.500 Q679.500 272 690 272 H852" fill="none" stroke="#aeeaa6" stroke-width="1.900"/>
<path d="M497.700 207.200 L508 212.300 L497.700 217.400 Z" fill="#0f8a18"/>
<path d="M850.800 266.900 L861.400 272 L850.800 277.100 Z" fill="#0f8a18"/>
</svg>
<svg class="abs" style="left:180px;top:250px" width="16" height="22" viewBox="0 0 16 22"><path d="M1.500 1.500 V17.300 L5.300 13.700 L8.200 20.300 L10.600 19.200 L7.700 12.800 H12.800 Z" fill="#fdfdfd" stroke="#111" stroke-width="1.100" stroke-linejoin="round"/></svg>

</body>
</html>
